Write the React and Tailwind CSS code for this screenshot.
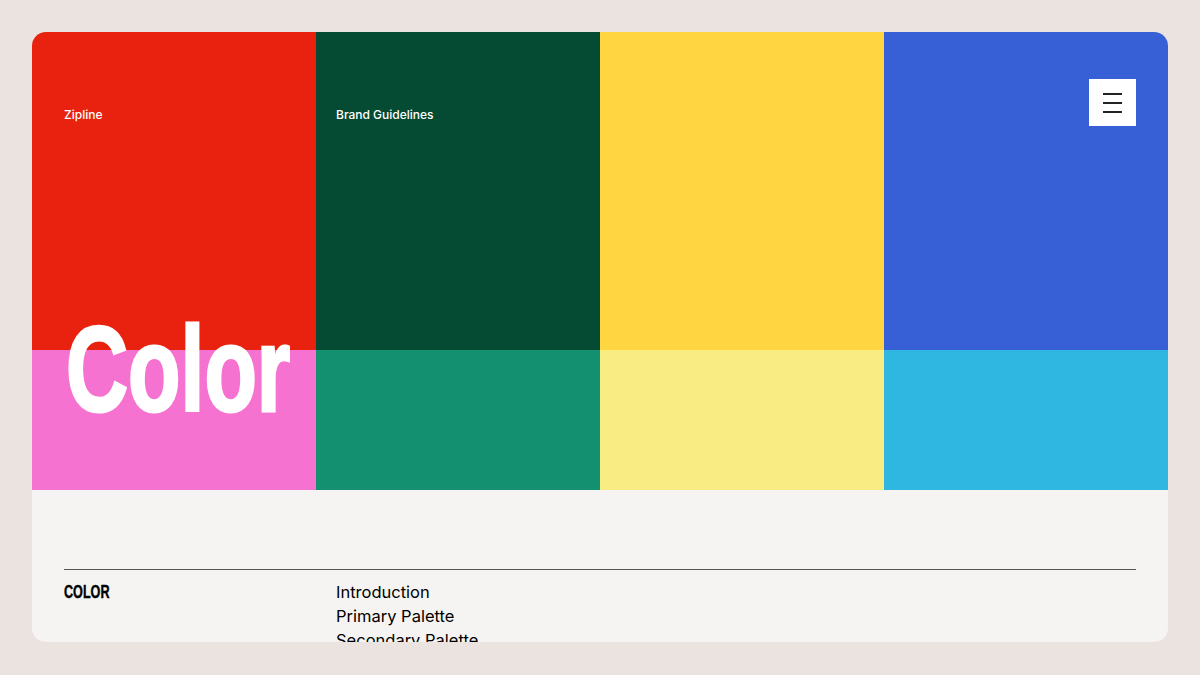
export default function App() {
  return (
    <div className="min-h-screen bg-[#ebe3e0] p-8" style={{ fontFamily: "Inter, 'Liberation Sans', sans-serif" }}>
      <div className="relative h-[610px] overflow-hidden rounded-[14px] bg-[#f5f4f2]">
        {/* Color blocks */}
        <div className="grid grid-cols-4">
          <div className="h-[318px] bg-[#e8220f] pl-8 pt-[74px] text-[12px] font-medium text-white">Zipline</div>
          <div className="h-[318px] bg-[#054a33] pl-5 pt-[74px] text-[12px] font-medium text-white">Brand Guidelines</div>
          <div className="h-[318px] bg-[#ffd641]" />
          <div className="flex h-[318px] justify-end bg-[#375fd6] pr-8 pt-[47px]">
            <button className="flex h-[47px] w-[47px] flex-col items-center justify-center gap-[7px] bg-white">
              <span className="block h-[2px] w-[19px] bg-[#222]" />
              <span className="block h-[2px] w-[19px] bg-[#222]" />
              <span className="block h-[2px] w-[19px] bg-[#222]" />
            </button>
          </div>
          <div className="h-[140px] bg-[#f672d0]" />
          <div className="h-[140px] bg-[#13906f]" />
          <div className="h-[140px] bg-[#f8ec82]" />
          <div className="h-[140px] bg-[#2fb7e1]" />
        </div>

        <h1
          className="absolute left-[34px] top-[277px] origin-left scale-x-[0.71] text-[121px] font-bold leading-none tracking-[0px] text-white [-webkit-text-stroke:3px_white]"
          style={{ fontFamily: "'Liberation Sans', Arial, sans-serif" }}
        >
          Color
        </h1>

        {/* Contents */}
        <div className="px-8 pt-[79px]">
          <div className="border-t border-[#555]" />
          <div className="flex pt-[10px]">
            <div className="w-[272px]">
              <span
                className="inline-block origin-left scale-x-[0.7] text-[18px] font-bold leading-[24px] text-black [-webkit-text-stroke:0.4px_black]"
                style={{ fontFamily: "'Liberation Sans', Arial, sans-serif" }}
              >
                COLOR
              </span>
            </div>
            <ul className="text-[16.5px] leading-[24px] text-black">
              <li>Introduction</li>
              <li>Primary Palette</li>
              <li>Secondary Palette</li>
            </ul>
          </div>
        </div>
      </div>
    </div>
  );
}
